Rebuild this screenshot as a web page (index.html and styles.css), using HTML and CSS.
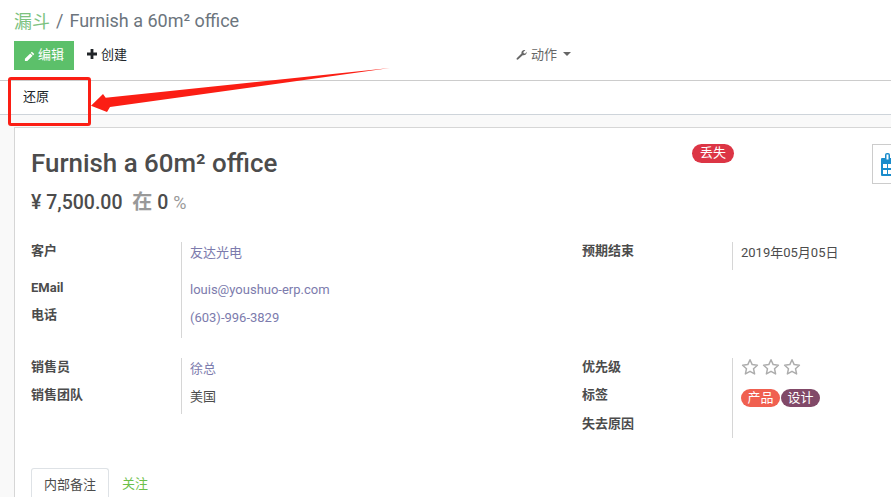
FILE: index.html
```html
<!DOCTYPE html>
<html lang="zh-CN">
<head>
<meta charset="UTF-8">
<meta name="viewport" content="width=device-width, initial-scale=1.0">
<title>Furnish a 60m² office</title>
<link rel="stylesheet" href="styles.css">
</head>
<body>
<div class="page">
    <div class="control-panel">
        <div class="breadcrumb">
            <a class="crumb-link">漏斗</a>
            <span class="crumb-sep">/</span>
            <span class="crumb-current">Furnish a 60m² office</span>
        </div>
        <div class="toolbar">
            <button class="btn-edit">
                <svg viewBox="0 0 12 12" width="11" height="11"><path d="M8.6 .8 11.2 3.4 10 4.6 7.4 2zM6.800 2.600 9.400 5.200 3.600 11H1V8.400z" fill="#fff"/></svg>
                <span>编辑</span>
            </button>
            <button class="btn-create">
                <svg viewBox="0 0 10 10" width="10" height="10"><path d="M3.6 0h2.800v3.600H10v2.800H6.400V10H3.600V6.400H0V3.600h3.600z" fill="#212529"/></svg>
                <span>创建</span>
            </button>
            <button class="btn-action">
                <svg viewBox="0 0 12 12" width="11" height="11"><path d="M.8 10 6 4.900C5.600 3 6.800 1 9 1c.5 0 .9.1 1.200.3L8 3.200l.4 1.500 1.500.4 1.700-2c.4 2.400-1.900 4.400-4.300 3.700L2.200 11.400c-.9.7-2.100-.5-1.400-1.400z" fill="#666"/></svg>
                <span>动作</span>
                <span class="caret"></span>
            </button>
        </div>
    </div>

    <div class="statusbar">
        <button class="btn-restore">还原</button>
    </div>

    <div class="sheet-bg">
        <div class="sheet">
            <div class="sheet-head">
                <div class="title-block">
                    <h1 class="title">Furnish a 60m² office</h1>
                    <h2 class="price">¥ 7,500.00 <span class="muted han">在</span> 0 <span class="muted percent">%</span></h2>
                </div>
                <span class="lost-badge">丢失</span>
                <div class="stat-box">
                    <svg viewBox="0 0 22 24" width="22" height="24">
                        <rect x="0" y="5" width="22" height="18" rx="1" fill="#1a8ccc"/>
                        <rect x="4" y="0" width="5" height="8" rx="2" fill="#1a8ccc"/>
                        <rect x="5.500" y="1.500" width="2" height="5" fill="#fff"/>
                        <rect x="2" y="11" width="4" height="4" fill="#fff"/>
                        <rect x="7" y="11" width="4" height="4" fill="#fff"/>
                        <rect x="2" y="17" width="4" height="4" fill="#fff"/>
                        <rect x="7" y="17" width="4" height="4" fill="#fff"/>
                    </svg>
                </div>
            </div>

            <div class="form-cols first">
                <div class="group">
                    <div class="row tall"><div class="label">客户</div><div class="value link">友达光电</div></div>
                    <div class="row"><div class="label latin">EMail</div><div class="value link latin">louis@youshuo-erp.com</div></div>
                    <div class="row end"><div class="label">电话</div><div class="value link latin">(603)-996-3829</div></div>
                </div>
                <div class="group">
                    <div class="row"><div class="label">预期结束</div><div class="value">2019年05月05日</div></div>
                </div>
            </div>

            <div class="form-cols second">
                <div class="group">
                    <div class="row"><div class="label">销售员</div><div class="value link">徐总</div></div>
                    <div class="row"><div class="label">销售团队</div><div class="value">美国</div></div>
                </div>
                <div class="group">
                    <div class="row">
                        <div class="label">优先级</div>
                        <div class="value stars">
                            <svg viewBox="0 0 18 18" width="18" height="18"><use href="#star"/></svg>
                            <svg viewBox="0 0 18 18" width="18" height="18"><use href="#star"/></svg>
                            <svg viewBox="0 0 18 18" width="18" height="18"><use href="#star"/></svg>
                        </div>
                    </div>
                    <div class="row wide">
                        <div class="label">标签</div>
                        <div class="value tags">
                            <span class="tag tag-red">产品</span>
                            <span class="tag tag-purple">设计</span>
                        </div>
                    </div>
                    <div class="row short"><div class="label">失去原因</div><div class="value"></div></div>
                </div>
            </div>

            <div class="tabs">
                <div class="tab active">内部备注</div>
                <div class="tab follow">关注</div>
            </div>
        </div>
    </div>

    <!-- red callout drawn over the status bar -->
    <div class="callout-box"></div>
    <svg class="callout-arrow" viewBox="0 0 891 497" width="891" height="497">
        <polygon points="91,105.700 103,94 105.700,97.700 390,68 110,107 107,112" fill="#fb1e14"/>
    </svg>
</div>

<svg width="0" height="0" class="defs">
    <symbol id="star" viewBox="0 0 18 18">
        <path d="M9 1.800 11.200 6.600 16.400 7.200 12.500 10.700 13.600 15.900 9 13.300 4.400 15.900 5.500 10.700 1.600 7.200 6.800 6.600z" fill="none" stroke="#adadad" stroke-width="1.500" stroke-linejoin="round"/>
    </symbol>
</svg>
</body>
</html>
```

FILE: styles.css
```css
html, body {
    margin: 0;
    padding: 0;
    height: 100%;
    overflow: hidden;
}
body {
    font-family: Roboto, "Noto Sans CJK SC", sans-serif;
    font-size: 13px;
    color: #4c4c4c;
    background-color: #fff;
}
button {
    font: inherit;
    border: none;
    background: none;
    padding: 0;
    cursor: pointer;
}
.page {
    position: relative;
    width: 891px;
    height: 497px;
    overflow: hidden;
}
.defs {
    position: absolute;
}

/* top panel */
.control-panel {
    height: 81px;
    box-sizing: border-box;
    padding: 10px 0 0 14px;
    border-bottom: 1px solid #ccc;
}
.breadcrumb {
    display: flex;
    align-items: center;
    height: 20px;
    font-size: 18px;
    color: #6c757d;
}
.crumb-link {
    color: #7cc27f;
}
.crumb-sep {
    margin: 0 6px;
}
.toolbar {
    display: flex;
    align-items: center;
    margin-top: 11px;
    height: 29px;
}
.toolbar button {
    display: flex;
    align-items: center;
    padding-bottom: 4px;
    box-sizing: border-box;
}
.btn-edit {
    width: 60px;
    height: 29px;
    gap: 3px;
    justify-content: center;
    background-color: #5cc06a;
    color: #fff;
}
.toolbar .btn-edit svg {
    margin-top: 5px;
}
.btn-create {
    gap: 4px;
    margin-left: 13px;
    color: #212529;
}
.btn-action {
    gap: 4px;
    margin-left: 389px;
    color: #666;
}
.toolbar .btn-action svg {
    margin-top: 2px;
}
.caret {
    width: 0;
    height: 0;
    margin-left: 2px;
    border-left: 4.500px solid transparent;
    border-right: 4.500px solid transparent;
    border-top: 4.500px solid #666;
}

/* status bar */
.statusbar {
    height: 34px;
    box-sizing: border-box;
    padding: 0 0 5px 23px;
    border-bottom: 1px solid #ced4da;
    display: flex;
    align-items: center;
}
.btn-restore {
    color: #212529;
}

/* form sheet */
.sheet-bg {
    height: 382px;
    box-sizing: border-box;
    padding: 12px 0 0 14px;
    background-color: #f9f9f9;
}
.sheet {
    height: 370px;
    box-sizing: border-box;
    padding: 16px 0 0 16px;
    background-color: #fff;
    border-top: 1px solid #d6d6d6;
    border-left: 1px solid #d6d6d6;
}
.sheet-head {
    display: flex;
    align-items: flex-start;
    height: 98px;
}
.title-block {
    width: 661px;
    flex: none;
}
.title {
    margin: 0;
    font-size: 25.900px;
    font-weight: 500;
    line-height: 38px;
}
.price {
    margin: 6px 0 0;
    font-size: 19.500px;
    font-weight: 500;
    line-height: 28px;
}
.muted {
    color: #999;
}
.han {
    font-size: 20px;
    font-weight: 700;
    margin: 0 0 0 5px;
}
.percent {
    font-size: 18px;
    font-weight: 400;
    margin-left: 0;
}
.lost-badge {
    flex: none;
    width: 42px;
    height: 19px;
    line-height: 18px;
    text-align: center;
    border-radius: 10px;
    color: #fff;
    background-color: #dc3545;
}
.stat-box {
    flex: none;
    width: 60px;
    height: 40px;
    box-sizing: border-box;
    margin-left: 138px;
    padding: 8px 0 0 8px;
    border: 1px solid #ccc;
}
.form-cols {
    display: grid;
    grid-template-columns: 551px 400px;
}
.form-cols.second {
    margin-top: 20px;
}
.row {
    display: grid;
    grid-template-columns: 150px 1fr;
    height: 28px;
}
.row.tall {
    height: 36px;
}
.row.end {
    height: 32px;
}
.row.wide {
    height: 29px;
}
.row.short {
    height: 23px;
}
.label {
    font-weight: 700;
    line-height: 18px;
    padding-top: 0;
    color: #4c4c4c;
}
.label.latin {
    padding-top: 1px;
}
.value {
    border-left: 1px solid #d6d6d6;
    padding: 2px 0 0 8px;
    line-height: 18px;
}
.value.latin {
    padding-top: 3px;
}
.link {
    color: #7c7bad;
}
.stars {
    display: flex;
    gap: 3px;
    padding-top: 0;
}
.tags {
    display: flex;
    align-items: flex-start;
    gap: 1px;
    padding-top: 3px;
}
.tag {
    height: 18px;
    line-height: 17px;
    padding: 0 6.500px;
    border-radius: 9px;
    color: #fff;
}
.tag-red {
    background-color: #f06050;
}
.tag-purple {
    background-color: #814968;
}

/* notebook tabs */
.tabs {
    display: flex;
    margin-top: 30px;
}
.tab {
    height: 32px;
    box-sizing: border-box;
    line-height: 32px;
    padding: 0 13px;
}
.tab.active {
    width: 78px;
    padding: 0 12px;
    border: 1px solid #dee2e6;
    border-bottom: none;
    border-radius: 3px 3px 0 0;
}
.tab.follow {
    color: #6cc04a;
}

/* annotation */
.callout-box {
    position: absolute;
    left: 8px;
    top: 77px;
    width: 83px;
    height: 49px;
    box-sizing: border-box;
    border: 3px solid #fb1e14;
    border-radius: 3px;
}
.callout-arrow {
    position: absolute;
    left: 0;
    top: 0;
}
```
